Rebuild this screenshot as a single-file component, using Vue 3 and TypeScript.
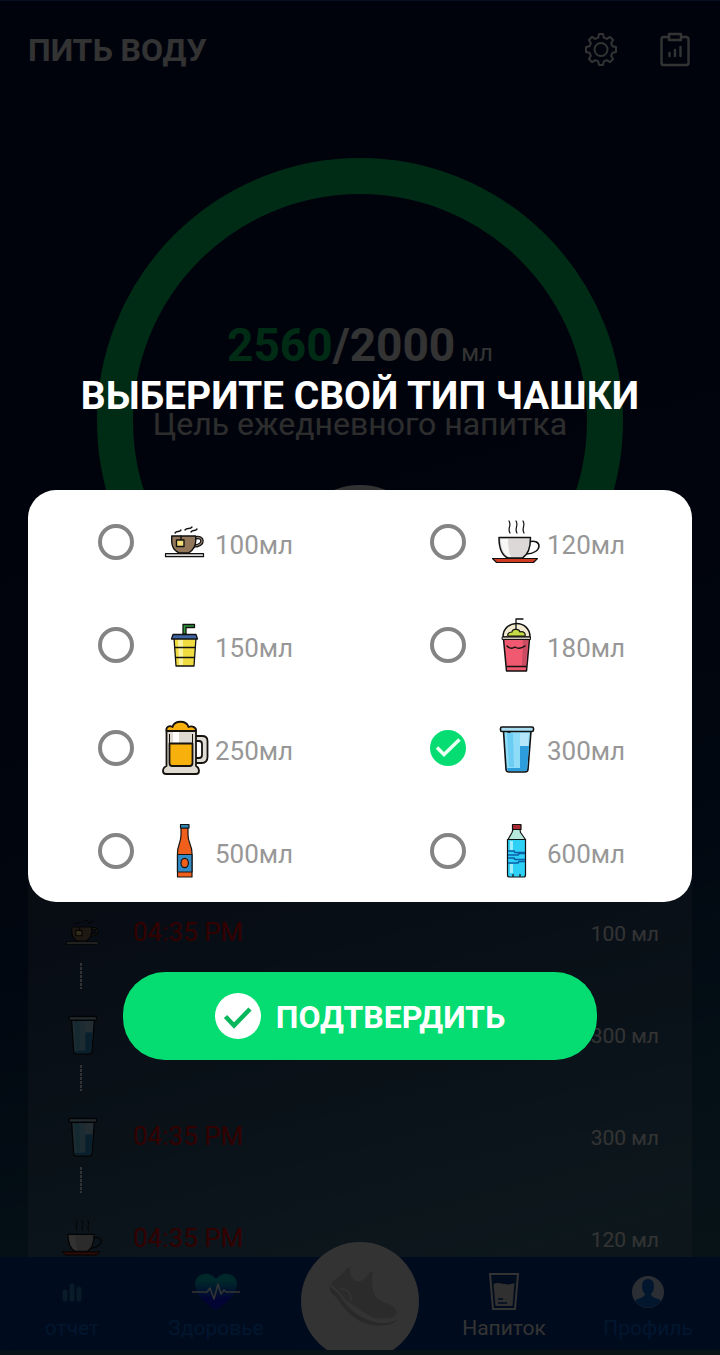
<script setup lang="ts">
import { ref } from 'vue'

interface Cup {
  volume: number
  icon: string
}

interface Drink {
  time: string
  volume: number
  icon: string
}

const cups: Cup[] = [
  { volume: 100, icon: 'tea' },
  { volume: 120, icon: 'coffee' },
  { volume: 150, icon: 'soda' },
  { volume: 180, icon: 'shake' },
  { volume: 250, icon: 'beer' },
  { volume: 300, icon: 'glass' },
  { volume: 500, icon: 'bottle' },
  { volume: 600, icon: 'water' },
]

const drinks: Drink[] = [
  { time: '04:35 PM', volume: 100, icon: 'tea' },
  { time: '04:35 PM', volume: 300, icon: 'glass' },
  { time: '04:35 PM', volume: 300, icon: 'glass' },
  { time: '04:35 PM', volume: 120, icon: 'coffee' },
]

const selected = ref<number>(300)
</script>

<template>
  <div class="app">
    <svg class="sprite" width="0" height="0" aria-hidden="true">
      <symbol id="cup-tea" viewBox="0 0 50 60">
        <g fill="none" stroke="#111" stroke-width="1.4" stroke-linecap="round" stroke-linejoin="round">
          <path d="M16 21c2-3 4 0 6-3M26 18c2-3 5 0 7-3M32 20c2-3 4 0 6-3" />
          <path d="M36 26c9-3 10 8-1 8" stroke-width="3.6" />
          <path d="M36 26c9-3 10 8-1 8" stroke="#93806d" stroke-width="1.2" />
          <path d="M12.700 24h24v5c0 6-4 10-7 12H20c-4-2-7.300-6-7.300-12z" fill="#93775b" />
          <path d="M22 24v4" />
          <path d="M17.500 28h7.500v6.500h-7.500z" fill="#f3dc77" />
          <path d="M6.500 41.700h38v3h-38z" fill="#d9d7d5" stroke-width="1.200" />
        </g>
      </symbol>
      <symbol id="cup-coffee" viewBox="0 0 50 60">
        <g fill="none" stroke="#111" stroke-width="1.500" stroke-linecap="round" stroke-linejoin="round">
          <path d="M18 9c3 5-2 7 1 12M25 9c3 5-2 7 1 12M32 9c3 5-2 7 1 12" stroke-width="1.200" />
          <path d="M38 30c5-2 10 0 10 4s-5 8-13 8" />
          <path d="M8 25.500h31.500c0 10-2 17-8 20.500H17C10 43 8 35 8 25.500z" fill="#dcd8d8" />
          <path d="M10 27h7c0 8 1 14 3 18h-2c-6-3-8-10-8-18z" fill="#f8f7f7" stroke="none" />
          <path d="M1.500 46.500h45l-4 4h-37z" fill="#cf3a22" stroke-width="1.200" />
        </g>
      </symbol>
      <symbol id="cup-soda" viewBox="0 0 50 60">
        <g stroke="#111" stroke-width="1.300" stroke-linejoin="round">
          <path d="M24 19v-9.500h11.500v3h-8.500V19z" fill="#2f9c3b" />
          <path d="M15 23l2 28h18l2-28z" fill="#f0dc40" />
          <path d="M19 24l1 26h4V24z" fill="#fbf3a0" stroke="none" />
          <path d="M14 19.500h23l1.500 4.500h-26z" fill="#3f65a5" />
          <path d="M15.500 32.500h21M16.500 42.500h19" fill="none" />
        </g>
      </symbol>
      <symbol id="cup-shake" viewBox="0 0 50 60">
        <g stroke="#111" stroke-width="1.500" stroke-linejoin="round" stroke-linecap="round">
          <path d="M12 22c0-18 27-18 27 0z" fill="#f1ead0" />
          <path d="M17 21c-1-3 2-4 4-4 0-3 7-4 8 0 3-1 6 1 5 4z" fill="#c5dc46" stroke-width="1.200" />
          <path d="M25 14V4h7" fill="none" stroke-width="1.300" />
          <path d="M12.500 24l3 32h20l3-32z" fill="#f0596f" />
          <path d="M32 25l-1 26h4l2-26z" fill="#c94c62" stroke="none" />
          <path d="M11.500 22h28v2.500h-28z" fill="#cfc7bb" stroke-width="1" />
          <path d="M16 31c3 3 5 3 8 1 3 2 6 2 10-1M16 51.500h19" fill="none" />
        </g>
      </symbol>
      <symbol id="cup-beer" viewBox="0 0 50 60">
        <g stroke="#16130f" stroke-width="1.800" stroke-linejoin="round">
          <path d="M36 18h7c4 0 5.500 2 5.500 5v16c0 4-2 6-6 6H36v-5h4c2 0 3-1 3-3V26c0-2-1-3-3-3h-4z" fill="#e0ddd6" />
          <path d="M7.500 13h29.500v35c2 1 3 3 3 5 0 2-1 3-3 3H7c-2 0-3-1-3-3s1-4 3.500-5z" fill="#dedad2" />
          <path d="M14 14h6v33h-6z" fill="#fff" stroke="none" />
          <path d="M10.500 25.500h23V45c0 2-1 3-3 3H13c-2 0-2.500-1-2.500-3z" fill="#f8b00c" />
          <path d="M10.500 25.500V16M33.500 25.500V16" fill="none" stroke-width="1" />
          <path d="M7.500 13c-1-4 3-6 6-4 2-7 14-7 16 0 4-2 8 1 7.500 4z" fill="#f8b00c" />
        </g>
      </symbol>
      <symbol id="cup-glass" viewBox="0 0 50 60">
        <g stroke="#111" stroke-width="1.600" stroke-linejoin="round" stroke-linecap="round">
          <path d="M12.500 13l2.500 38c0 2 1 3 3 3h16c2 0 3-1 3-3l3-38z" fill="#8fdcf8" />
          <path d="M29 28h9l-2 24c0 1-1 1-2 1H17l-1-3h13z" fill="#2d9ddc" stroke="none" />
          <path d="M16 15h6l1 34h-5z" fill="#6bcdf3" stroke="none" />
          <path d="M29 15h9l-1 13h-8z" fill="#b5e6fa" stroke="none" />
          <rect x="9.500" y="9" width="33" height="4.500" rx="1.500" fill="#a9ddf1" />
          <path d="M17 14h2" />
        </g>
      </symbol>
      <symbol id="cup-bottle" viewBox="0 0 50 60">
        <g stroke="#151515" stroke-width="1.200" stroke-linejoin="round">
          <path d="M22 7v7c0 8-3.500 10-3.500 18v24h14.500V32c0-8-4-10-4-18V7z" fill="#f0601c" />
          <path d="M21.500 3.500h8.500V7h-8.500z" fill="#2a86b5" />
          <path d="M18.500 33.500H33v17.500H18.500z" fill="#318dca" />
          <ellipse cx="25.700" cy="42" rx="3.700" ry="4.700" fill="#f0601c" />
        </g>
      </symbol>
      <symbol id="cup-water" viewBox="0 0 50 60">
        <g stroke="#111" stroke-width="1.200" stroke-linejoin="round">
          <path d="M22 8.500l-1 3-4 7h17.500l-5-7-.500-3z" fill="#b6e9dc" />
          <path d="M21.500 3.500h8.500v5h-8.500z" fill="#a92c32" />
          <path d="M16.500 18.500h18V54c0 1-1 2-2 2h-14c-1 0-2-1-2-2z" fill="#2fd0f5" />
          <path d="M19 20h3v9h-3zM19 43h3v9h-3z" fill="#9cecfb" stroke="none" />
          <path d="M17 30h6l1 1.500h10M17 34h10l1-1.500h6M17 37h6l1 1.500h10M17 42h10l1-1.500h6" fill="none" stroke="#0b5ea8" stroke-width="1.600" />
          <path d="M22 56v-3M29 56v-3" fill="none" />
        </g>
      </symbol>
    </svg>

    <div class="page">
      <header class="topbar">
        <h1>ПИТЬ ВОДУ</h1>
        <button class="icon-button" type="button" aria-label="Настройки">
          <svg viewBox="0 0 36 36" width="36" height="36" fill="none" stroke="currentColor" stroke-width="2" stroke-linejoin="round">
            <path d="M15.200 5.600 16 2h4l.800 3.600 3 1.300L27 4.900 30.100 8l-2 3.200 1.300 3L33 15v5l-3.600.800-1.300 3 2 3.200-3.100 3.100-3.200-2-3 1.300L20 33h-4l-.800-3.600-3-1.300-3.200 2L5.900 27l2-3.200-1.300-3L3 20v-5l3.600-.800 1.300-3L5.900 8 9 4.900l3.200 2z" />
            <circle cx="18" cy="17.500" r="6.500" />
          </svg>
        </button>
        <button class="icon-button" type="button" aria-label="Статистика">
          <svg viewBox="0 0 36 36" width="36" height="36" fill="none" stroke="currentColor" stroke-width="2.400" stroke-linejoin="round" stroke-linecap="round">
            <path d="M12 5H6.500C5 5 4.500 6 4.500 7v24c0 1.500 1 2 2 2h23c1.500 0 2-1 2-2V7c0-1-1-2-2-2H24" />
            <path d="M12 2h12v6H12zM12.500 21v3M18 18v6M23.500 15v9" />
          </svg>
        </button>
      </header>

      <section class="goal">
        <p class="amount"><span class="drunk">2560</span>/2000<small>мл</small></p>
        <p class="caption">Цель ежедневного напитка</p>
        <span class="add"></span>
      </section>

      <ul class="history">
        <li v-for="(drink, i) in drinks" :key="i">
          <div class="track">
            <svg class="mini" aria-hidden="true"><use :href="'#cup-' + drink.icon" /></svg>
            <i v-if="i < drinks.length - 1" class="dots"></i>
          </div>
          <time>{{ drink.time }}</time>
          <span class="portion">{{ drink.volume }} мл</span>
        </li>
      </ul>

      <nav class="tabs">
        <a href="#report">
          <svg viewBox="0 0 48 38" width="48" height="38" fill="none" stroke="#2a86c4" stroke-width="5" stroke-linecap="round">
            <path d="M17 19v7M24 13v13M31 16v10" />
          </svg>
          отчет
        </a>
        <a href="#health">
          <svg viewBox="0 0 48 38" width="48" height="38">
            <defs>
              <linearGradient id="heart" x1="0" y1="0" x2="0" y2="1">
                <stop offset="0.200" stop-color="#00c3d2" />
                <stop offset="0.700" stop-color="#0a14ff" />
              </linearGradient>
            </defs>
            <path d="M24 37C12 29 3 21 3 11 3 0 18-3 24 6c6-9 21-6 21 5 0 10-9 18-21 26z" fill="url(#heart)" />
            <path d="M0 19h15l3-4 4 11 4-15 3 10 3-4 2 2h14" fill="none" stroke="#fff" stroke-width="1.600" stroke-linejoin="round" />
          </svg>
          Здоровье
        </a>
        <a class="steps" href="#steps" aria-label="Шаги">
          <svg viewBox="30 22 356 356" width="118" height="118">
            <path d="M118 150c14-20 38-26 48-48l14-5c-4 18 0 34 14 42 18 6 34-8 42-26l10-2c-2 30-4 66 18 84 16 12 42 14 52 30 8 14 0 26-18 26-34 0-44 6-60-6l-60-38c-26-18-32-44-60-57z" fill="#d8d8d8" />
            <path d="M116 156c28 16 34 38 60 64 24 24 60 44 96 46 20 1 42-4 48-12-4 14-32 22-66 20-40-4-66-22-88-46-14-14-20-30-36-44-10-8-16-18-14-28z" fill="#cdcdcd" />
            <path d="M148 162c22 2 34 16 32 38" fill="none" stroke="#fff" stroke-width="5" />
          </svg>
        </a>
        <a class="active" href="#drink">
          <svg viewBox="0 0 48 38" width="48" height="38">
            <path d="M10 1h28l-3 35H13z" fill="none" stroke="#fff" stroke-width="2" />
            <path d="M13.500 11c7-3 11 3 21-1l-2 23H15.500z" fill="#eee" />
            <path d="M18 26h5M18 30h9" stroke="#003791" stroke-width="1.500" />
          </svg>
          Напиток
        </a>
        <a href="#profile">
          <svg viewBox="0 0 48 38" width="48" height="38">
            <circle cx="24" cy="19" r="16" fill="#d5e6ff" />
            <path d="M24 6c4 0 6 3 6 7s-1 6-3 8c0 4 8 4 10 7-6 9-20 9-26 0 2-3 10-3 10-7-2-2-3-4-3-8s2-7 6-7z" fill="#0a6ee6" />
          </svg>
          Профиль
        </a>
      </nav>
    </div>

    <div class="overlay">
      <form class="dialog" role="dialog" aria-labelledby="dialog-title" @submit.prevent>
        <h2 id="dialog-title">ВЫБЕРИТЕ СВОЙ ТИП ЧАШКИ</h2>
        <div class="cups">
          <label v-for="cup in cups" :key="cup.volume" class="cup">
            <span class="radio">
              <input v-model="selected" type="radio" name="cup" :value="cup.volume" />
              <svg v-if="selected === cup.volume" viewBox="0 0 36 36" fill="none" stroke="#e8fff2" stroke-width="3.500" aria-hidden="true">
                <path d="M7 17.500l7 7L29.500 9.500" />
              </svg>
            </span>
            <svg class="pic" aria-hidden="true"><use :href="'#cup-' + cup.icon" /></svg>
            <span class="volume">{{ cup.volume }}мл</span>
          </label>
        </div>
        <button class="confirm" type="submit">
          <svg viewBox="0 0 46 46" width="46" height="46" aria-hidden="true">
            <circle cx="23" cy="23" r="23" fill="#fff" />
            <path d="M10.500 23.500l8.500 9L35 16" fill="none" stroke="#08b75c" stroke-width="4.500" />
          </svg>
          <span>ПОДТВЕРДИТЬ</span>
        </button>
      </form>
    </div>
  </div>
</template>

<style>
body {
  background: #01040d;
}
</style>

<style scoped>
.app {
  display: grid;
  grid-template-columns: minmax(0, 1fr);
  min-height: 100vh;
  font-family: Roboto, "Noto Sans", sans-serif;
}

.sprite {
  position: absolute;
}

.page,
.overlay {
  grid-area: 1 / 1;
}

h1,
h2,
p,
ul {
  margin: 0;
  padding: 0;
}

.page {
  display: flex;
  flex-direction: column;
  box-sizing: border-box;
  padding-bottom: 5px;
  border-top: 1px solid #2d4baf;
  background: linear-gradient(165deg, #030f3c 0%, #05143c 45%, #082855 65%, #1e5a78 88%, #32646e 100%);
}

.topbar {
  display: flex;
  align-items: center;
  gap: 38px;
  height: 98px;
  padding: 0 27px 0 28px;
  color: #fff;
}

.topbar h1 {
  flex: 1;
  font-size: 32px;
  line-height: 40px;
  font-weight: 700;
}

.icon-button {
  display: flex;
  padding: 0;
  border: 0;
  background: none;
  color: #fff;
}

.goal {
  display: flex;
  flex-direction: column;
  align-items: center;
  align-self: center;
  box-sizing: border-box;
  width: 526px;
  height: 526px;
  margin-top: 59px;
  padding-top: 123px;
  border: 36px solid #00dc6e;
  border-radius: 50%;
  color: #fff;
  white-space: nowrap;
}

.amount {
  font-size: 46px;
  line-height: 56px;
  font-weight: 700;
}

.drunk {
  color: #00dc6e;
}

.amount small {
  margin-left: 6px;
  font-size: 24px;
  line-height: 24px;
  font-weight: 400;
}

.caption {
  margin-top: 31px;
  font-size: 32px;
  line-height: 40px;
  color: #e1e1e1;
}

.add {
  flex: none;
  width: 140px;
  height: 140px;
  margin-top: 41px;
  border-radius: 50%;
  background: #fff;
}

.history {
  flex: 1;
  margin: 196px 28px 0;
  padding: 32px 33px 0;
  background: rgba(255, 255, 255, 0.14);
  list-style: none;
}

.history li {
  display: flex;
  align-items: flex-start;
  line-height: 40px;
}

.track {
  display: flex;
  flex-direction: column;
  width: 42px;
  margin-right: 30px;
}

.mini {
  width: 42px;
  height: 50px;
  margin: -5px 0;
}

.dots {
  width: 2px;
  height: 26px;
  margin: 11px 0 25px 19px;
  background: repeating-linear-gradient(#fff 0 3px, transparent 3px 4px);
}

.history time {
  flex: 1;
  font-size: 26px;
  color: #f00;
}

.portion {
  padding-top: 2px;
  font-size: 21px;
  color: #fff;
}

.history li:last-child {
  height: 39px;
}

.tabs {
  display: grid;
  grid-template-columns: repeat(5, 1fr);
  padding: 16px 0 9px;
  background: #003791;
  clip-path: inset(-40px 0 0 0);
}

.tabs a {
  display: flex;
  flex-direction: column;
  align-items: center;
  gap: 4px;
  font-size: 21px;
  line-height: 26px;
  color: #0a6ee6;
  text-decoration: none;
}

.tabs a.active {
  color: #fff;
}

.tabs a.steps {
  justify-self: center;
  width: 118px;
  height: 118px;
  margin: -31px 0 -50px;
  border-radius: 50%;
  background: #fff;
}

.overlay {
  position: relative;
  background: rgba(0, 0, 0, 0.8);
}

.dialog {
  display: flex;
  flex-direction: column;
  padding: 371px 28px 0;
}

.dialog h2 {
  font-size: 39px;
  line-height: 50px;
  font-weight: 700;
  text-align: center;
  color: #fff;
}

.cups {
  display: grid;
  grid-template-columns: 1fr 1fr;
  margin-top: 69px;
  border-radius: 28px;
  background: #fff;
}

.cup {
  display: flex;
  align-items: center;
  height: 103px;
  padding-left: 70px;
}

.radio {
  display: grid;
  width: 36px;
  height: 36px;
  margin-right: 25px;
}

.radio input,
.radio svg {
  grid-area: 1 / 1;
}

.radio svg {
  pointer-events: none;
}

.radio input {
  box-sizing: border-box;
  width: 36px;
  height: 36px;
  margin: 0;
  border: 4px solid #848484;
  border-radius: 50%;
  appearance: none;
}

.radio input:checked {
  border-color: #05dc71;
  background: #05dc71;
}

.pic {
  width: 50px;
  height: 60px;
}

.volume {
  padding-top: 6px;
  margin-left: 6px;
  font-size: 26px;
  line-height: 32px;
  color: #979797;
}

.confirm {
  display: flex;
  align-items: center;
  justify-content: center;
  align-self: center;
  gap: 15px;
  width: 474px;
  height: 88px;
  margin-top: 70px;
  padding: 0;
  border: 0;
  border-radius: 42px;
  background: #05dc71;
  color: #fff;
  font: 700 32px/40px Roboto, "Noto Sans", sans-serif;
}

.confirm span {
  padding-top: 2px;
}
</style>
